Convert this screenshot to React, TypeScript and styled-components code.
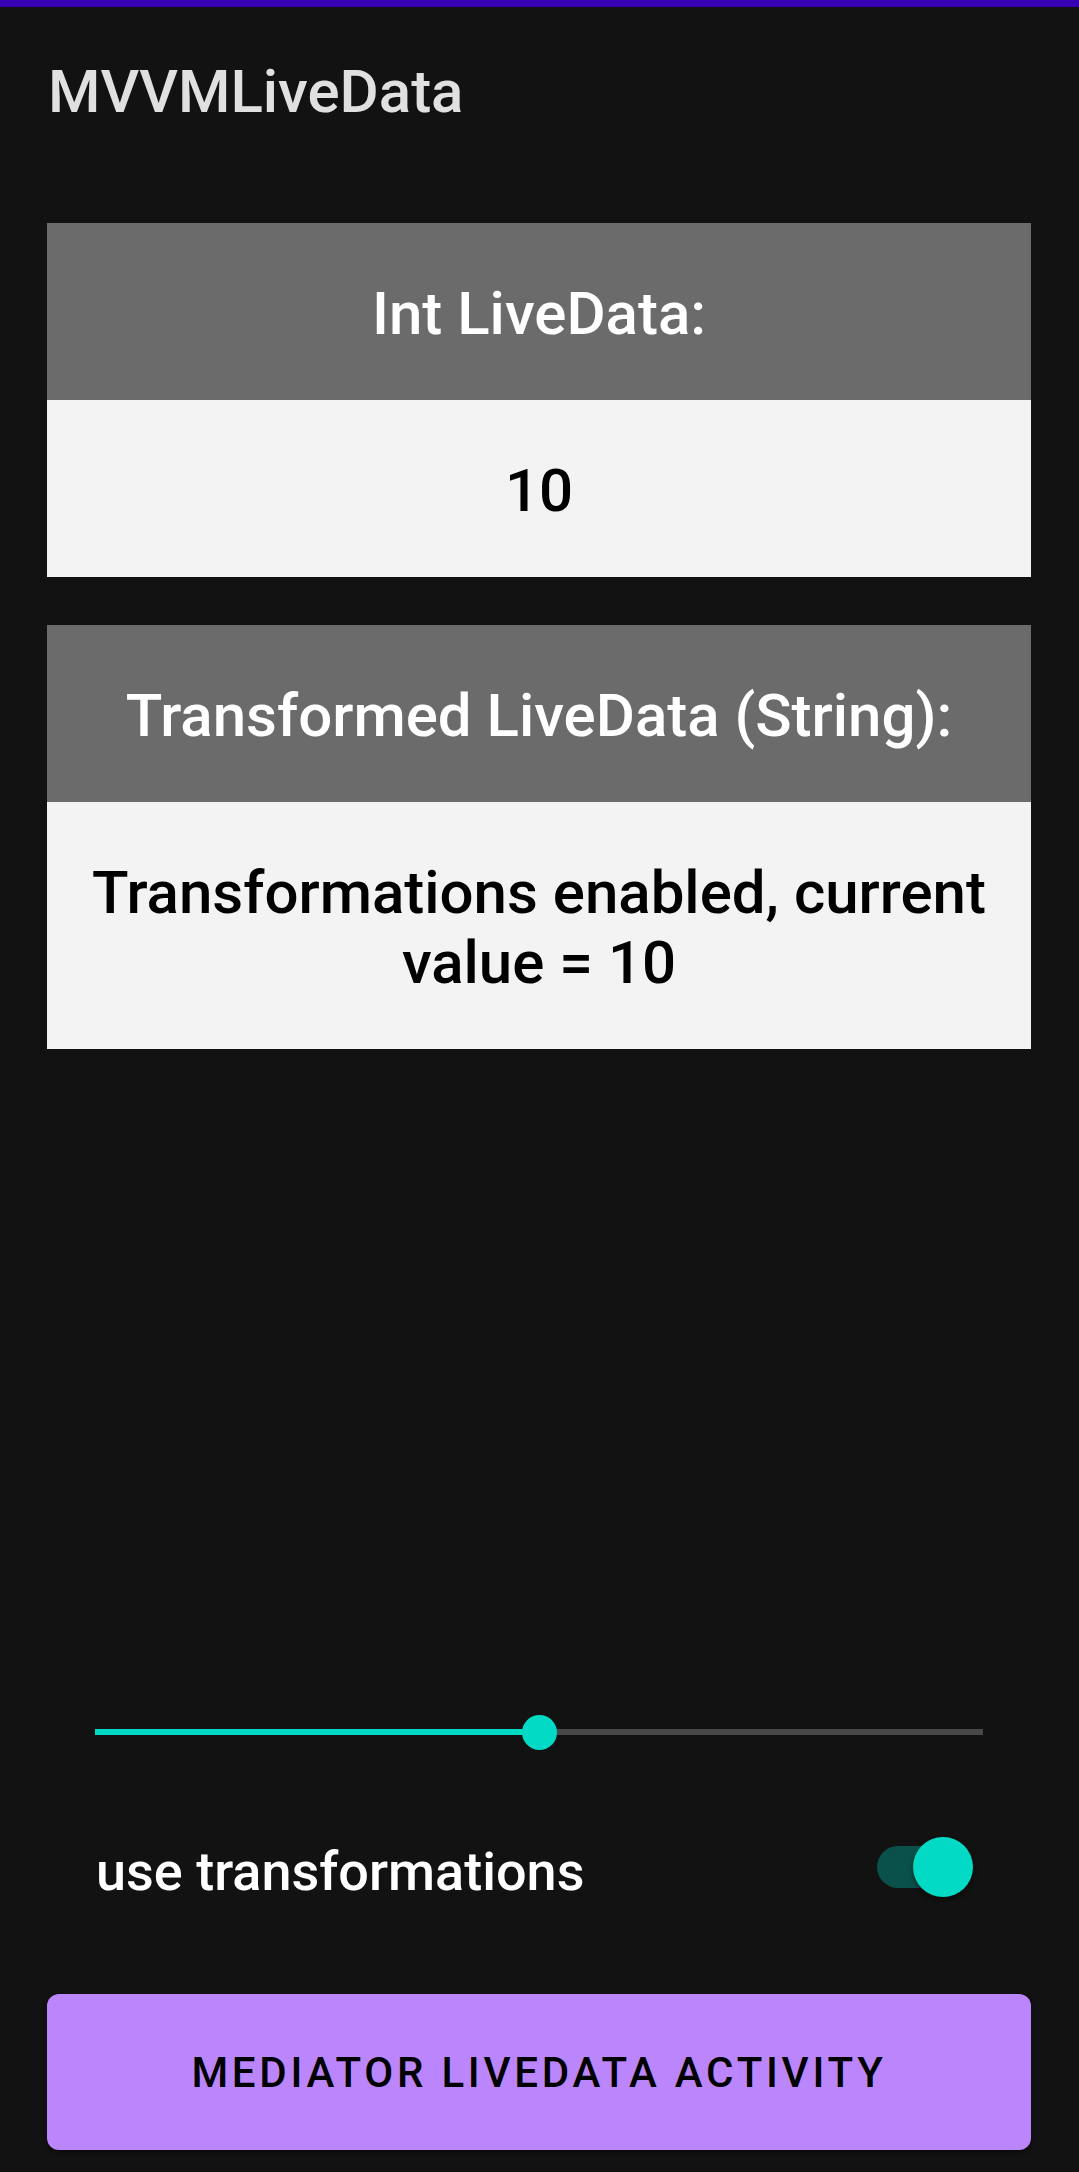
import React from "react";
import styled, { createGlobalStyle } from "styled-components";

const GlobalStyle = createGlobalStyle`
  html, body { margin: 0; padding: 0; background: #121212; }
  body { font-family: Roboto, "Noto Sans", "Liberation Sans", sans-serif; }
  * { box-sizing: border-box; }
`;

const Screen = styled.div`
  height: 100vh;
  min-height: 2172px;
  display: flex;
  flex-direction: column;
  background: #121212;
`;

const StatusBar = styled.div`
  height: 7px;
  background: #3700b3;
  flex-shrink: 0;
`;

const AppBar = styled.header`
  height: 216px;
  padding: 50px 48px 0 48px;
  flex-shrink: 0;
`;

const Title = styled.h1`
  margin: 0;
  font-size: 60px;
  line-height: 70px;
  font-weight: 500;
  color: rgba(255, 255, 255, 0.87);
`;

const Cards = styled.main`
  display: flex;
  flex-direction: column;
  gap: 48px;
  padding: 0 48px 0 47px;
`;

const Card = styled.section`
  display: flex;
  flex-direction: column;
`;

const CardPart = styled.div<{ $header?: boolean }>`
  background: ${(p) => (p.$header ? "#6b6b6b" : "#f3f3f3")};
  color: ${(p) => (p.$header ? "#ffffff" : "#000000")};
  padding: 56px 24px 51px;
  text-align: center;
  font-size: 60px;
  line-height: 70px;
  font-weight: 500;
`;

const Spacer = styled.div`
  flex: 1;
`;

const Controls = styled.div`
  display: flex;
  flex-direction: column;
  padding: 0 96px 0 95px;
`;

const SliderRow = styled.div`
  height: 60px;
  position: relative;
  display: flex;
  align-items: center;
`;

const Track = styled.div`
  position: relative;
  width: 100%;
  height: 6px;
  background: #484848;
`;

const ActiveTrack = styled.div`
  position: absolute;
  left: 0;
  top: 0;
  bottom: 0;
  background: #03dac5;
`;

const Thumb = styled.div`
  position: absolute;
  top: 50%;
  width: 35px;
  height: 35px;
  margin-left: -17.5px;
  margin-top: -17.5px;
  border-radius: 50%;
  background: #03dac5;
`;

const SwitchRow = styled.div`
  margin-top: 60px;
  height: 90px;
  display: flex;
  align-items: center;
  justify-content: space-between;
  padding-right: 10px;
`;

const Label = styled.span`
  font-size: 54px;
  font-weight: 500;
  color: #ffffff;
  margin-top: 8px;
  padding-left: 1px;
`;

const Switch = styled.div`
  position: relative;
  width: 96px;
  height: 60px;
  display: flex;
  align-items: center;
`;

const SwitchTrack = styled.div`
  width: 92px;
  height: 42px;
  border-radius: 21px;
  background: #0b514b;
`;

const SwitchThumb = styled.div`
  position: absolute;
  right: 0;
  top: 0;
  width: 60px;
  height: 60px;
  border-radius: 50%;
  background: #03dac5;
  box-shadow: 0 3px 5px rgba(0, 0, 0, 0.5);
`;

const Button = styled.button`
  margin: 82px 48px 22px 47px;
  height: 156px;
  border: none;
  border-radius: 12px;
  background: #bb86fc;
  color: #000000;
  font-family: Roboto, "Noto Sans", "Liberation Sans", sans-serif;
  font-size: 42px;
  font-weight: 500;
  letter-spacing: 3.75px;
  text-transform: uppercase;
  box-shadow: 0 3px 4px rgba(0, 0, 0, 0.4);
  flex-shrink: 0;
`;

const sliderValue = 0.5;

export default function App() {
  return (
    <>
      <GlobalStyle />
      <Screen>
        <StatusBar />
        <AppBar>
          <Title>MVVMLiveData</Title>
        </AppBar>
        <Cards>
          <Card>
            <CardPart $header>Int LiveData:</CardPart>
            <CardPart>10</CardPart>
          </Card>
          <Card>
            <CardPart $header>Transformed LiveData (String):</CardPart>
            <CardPart>Transformations enabled, current value = 10</CardPart>
          </Card>
        </Cards>
        <Spacer />
        <Controls>
          <SliderRow>
            <Track>
              <ActiveTrack style={{ width: `${sliderValue * 100}%` }} />
              <Thumb style={{ left: `${sliderValue * 100}%` }} />
            </Track>
          </SliderRow>
          <SwitchRow>
            <Label>use transformations</Label>
            <Switch>
              <SwitchTrack />
              <SwitchThumb />
            </Switch>
          </SwitchRow>
        </Controls>
        <Button>Mediator LiveData Activity</Button>
      </Screen>
    </>
  );
}
